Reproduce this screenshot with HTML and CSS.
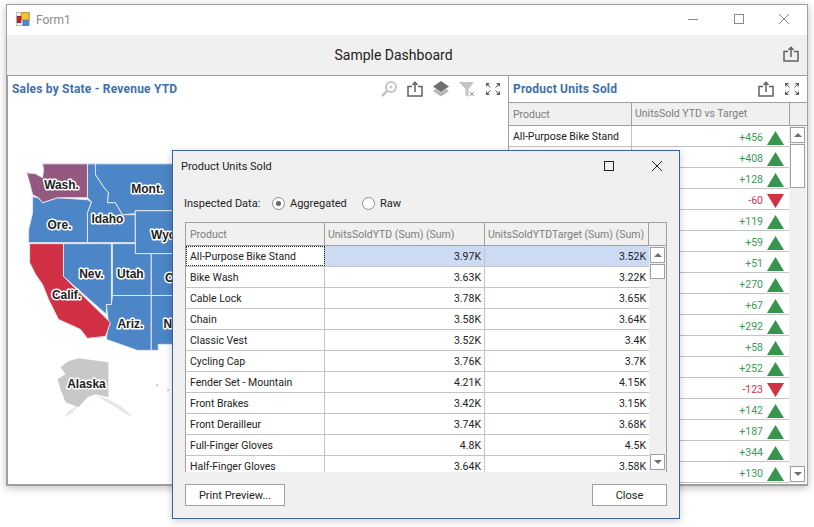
FILE: index.html
```html
<!DOCTYPE html>
<html lang="en">
<head>
    <meta charset="UTF-8">
    <title>Form1</title>
    <link rel="stylesheet" href="styles.css">
</head>
<body>
    <svg class="defs" width="0" height="0">
        <symbol id="share" viewBox="0 0 16 16">
            <path d="M5 5.500H1v9.500h14V5.500h-4" fill="none" stroke="currentColor" stroke-width="1.500"/>
            <path d="M8 11V1.500M5.500 4l2.500-2.700L10.500 4" fill="none" stroke="currentColor" stroke-width="1.500"/>
        </symbol>
        <symbol id="expand" viewBox="0 0 16 16">
            <path d="M1 2h4L1 6zM15 2v4l-4-4zM1 14v-4l4 4zM15 14h-4l4-4z" fill="currentColor"/>
            <path d="M2.500 3.500l3 3M13.500 3.500l-3 3M2.500 12.500l3-3M13.500 12.500l-3-3" stroke="currentColor"/>
        </symbol>
    </svg>

    <div class="window">
        <div class="titlebar">
            <svg class="app-icon" width="14" height="14" viewBox="0 0 16 16">
                <rect x="0.500" y="0.500" width="15" height="15" fill="#f4f4f4" stroke="#b9b9b9"/>
                <rect x="6" y="1" width="9" height="8" fill="#f6c433" stroke="#c98d16"/>
                <rect x="1.500" y="5" width="4" height="7" fill="#c8242a" stroke="#7d1a1a"/>
                <rect x="8" y="10" width="6" height="5" fill="#4f8de0" stroke="#2f62ad"/>
            </svg>
            <span class="form-name">Form1</span>
            <div class="win-buttons">
                <svg width="10" height="10" viewBox="0 0 10 10"><path d="M0 5.500h10" stroke="#8a8a8a"/></svg>
                <svg width="10" height="10" viewBox="0 0 10 10"><rect x="0.500" y="0.500" width="9" height="9" fill="none" stroke="#8a8a8a"/></svg>
                <svg width="10" height="10" viewBox="0 0 10 10"><path d="M0 0l10 10M10 0L0 10" stroke="#8a8a8a"/></svg>
            </div>
        </div>

        <div class="toolbar">
            <span class="dash-title">Sample Dashboard</span>
            <svg class="icon toolbar-share"><use href="#share"/></svg>
        </div>

        <div class="panels">
            <section class="panel map-panel">
                <div class="panel-head">
                    <span class="panel-title">Sales by State - Revenue YTD</span>
                    <div class="panel-icons">
                        <svg class="icon icon-dim" viewBox="0 0 16 16">
                            <circle cx="10" cy="6" r="5" fill="none" stroke="currentColor" stroke-width="2"/>
                            <circle cx="10" cy="6" r="1.500" fill="currentColor"/>
                            <path d="M6 10L1 15" stroke="currentColor" stroke-width="2.500"/>
                        </svg>
                        <svg class="icon"><use href="#share"/></svg>
                        <svg class="icon" viewBox="0 0 16 16">
                            <path d="M0 10l3-2 5 3.500L13 8l3 2-8 5.500z" fill="#b5b5b5"/>
                            <path d="M8 0l8 5.500L8 11 0 5.500z" fill="#6e6e73"/>
                        </svg>
                        <svg class="icon icon-dim" viewBox="0 0 16 16">
                            <path d="M0 1h15L9.500 8v8l-3-2V8z" fill="currentColor"/>
                            <path d="M11 11l4 4M15 11l-4 4" stroke="#8f8f8f"/>
                        </svg>
                        <svg class="icon"><use href="#expand"/></svg>
                    </div>
                </div>
                <svg class="map" viewBox="8 102 500 383" width="500" height="383">
                    <g class="states">
                        <polygon class="st-blue" points="95,164 180,164 180,211 135,211 135,214 122,215 115,203 107,203 108,193 103,187 95,175"/>
                        <polygon class="st-blue" points="87,164 95,164 95,175 103,187 108,193 107,203 115,203 122,215 135,215 135,243 87,243 87,213 91,202 87,198"/>
                        <polygon class="st-blue" points="32,197 38,198 42,203 57,198 87,200 91,202 87,213 87,243 28,243 28,230 32,213"/>
                        <polygon class="st-purple" points="42,164 87,164 87,198 57,198 42,203 38,198 32,195 29,183 26,173 35,174 42,178 43,170"/>
                        <polygon class="st-blue" points="135,211 180,211 180,254 135,254"/>
                        <polygon class="st-blue" points="112,244 135,244 135,254 151,254 151,296 112,296"/>
                        <polygon class="st-blue" points="151,254 180,254 180,296 151,296"/>
                        <polygon class="st-blue" points="63,244 111,244 111,305 106,305 106,315 63,277"/>
                        <polygon class="st-blue" points="112,296 151,296 151,351 137,351 106,340 108,323 106,305 111,305"/>
                        <polygon class="st-blue" points="151,296 180,296 180,345 158,345 158,351 151,351"/>
                        <polygon class="st-red" points="29,244 63,244 63,277 110,323 107,332 105,337 87,339 80,330 58,320 48,300 42,285 35,275 29,263"/>
                    </g>
                    <g class="alaska">
                        <polygon points="78,359 108,363 108,398 95,395 87,398 78,408 65,403 60,390 57,380 65,375 60,368 68,362"/>
                        <polygon class="alaska-faint" points="95,396 108,400 122,408 132,417 128,416 112,406"/>
                        <polygon class="alaska-faint" points="78,406 72,414 63,418 68,412"/>
                        <rect x="156" y="385" width="2" height="2"/>
                        <rect x="167" y="390" width="2" height="2"/>
                    </g>
                    <g class="labels">
                        <text x="61" y="189">Wash.</text>
                        <text x="59" y="229">Ore.</text>
                        <text x="107" y="223">Idaho</text>
                        <text x="147" y="193">Mont.</text>
                        <text x="165" y="239">Wyo.</text>
                        <text x="178" y="282">Colo</text>
                        <text x="91" y="278">Nev.</text>
                        <text x="130" y="278">Utah</text>
                        <text x="66" y="300">Calif.</text>
                        <text x="130" y="329">Ariz.</text>
                        <text x="176" y="329">N.M.</text>
                        <text x="86" y="389">Alaska</text>
                    </g>
                </svg>
            </section>

            <section class="panel units-panel">
                <div class="panel-head">
                    <span class="panel-title">Product Units Sold</span>
                    <div class="panel-icons">
                        <svg class="icon"><use href="#share"/></svg>
                        <svg class="icon"><use href="#expand"/></svg>
                    </div>
                </div>
                <div class="units-grid">
                    <div class="units-table">
                        <div class="units-row units-header">
                            <div class="c-name">Product</div>
                            <div class="c-delta">UnitsSold YTD vs Target</div>
                            <div class="c-corner"></div>
                        </div>
                        <div class="units-row"><div class="c-name">All-Purpose Bike Stand</div><div class="c-delta up">+456<i class="tri"></i></div></div>
                        <div class="units-row"><div class="c-name"></div><div class="c-delta up">+408<i class="tri"></i></div></div>
                        <div class="units-row"><div class="c-name"></div><div class="c-delta up">+128<i class="tri"></i></div></div>
                        <div class="units-row"><div class="c-name"></div><div class="c-delta down">-60<i class="tri"></i></div></div>
                        <div class="units-row"><div class="c-name"></div><div class="c-delta up">+119<i class="tri"></i></div></div>
                        <div class="units-row"><div class="c-name"></div><div class="c-delta up">+59<i class="tri"></i></div></div>
                        <div class="units-row"><div class="c-name"></div><div class="c-delta up">+51<i class="tri"></i></div></div>
                        <div class="units-row"><div class="c-name"></div><div class="c-delta up">+270<i class="tri"></i></div></div>
                        <div class="units-row"><div class="c-name"></div><div class="c-delta up">+67<i class="tri"></i></div></div>
                        <div class="units-row"><div class="c-name"></div><div class="c-delta up">+292<i class="tri"></i></div></div>
                        <div class="units-row"><div class="c-name"></div><div class="c-delta up">+58<i class="tri"></i></div></div>
                        <div class="units-row"><div class="c-name"></div><div class="c-delta up">+252<i class="tri"></i></div></div>
                        <div class="units-row"><div class="c-name"></div><div class="c-delta down">-123<i class="tri"></i></div></div>
                        <div class="units-row"><div class="c-name"></div><div class="c-delta up">+142<i class="tri"></i></div></div>
                        <div class="units-row"><div class="c-name"></div><div class="c-delta up">+187<i class="tri"></i></div></div>
                        <div class="units-row"><div class="c-name"></div><div class="c-delta up">+344<i class="tri"></i></div></div>
                        <div class="units-row"><div class="c-name"></div><div class="c-delta up">+130<i class="tri"></i></div></div>
                    </div>
                    <div class="scrollbar units-scroll">
                        <div class="sb-btn"><i class="arrow-up"></i></div>
                        <div class="sb-thumb"></div>
                        <div class="sb-track"></div>
                        <div class="sb-btn"><i class="arrow-down"></i></div>
                    </div>
                </div>
            </section>
        </div>
    </div>

    <!-- Inspect dialog, floats over the dashboard -->
    <div class="dialog">
        <div class="dialog-title">
            <span>Product Units Sold</span>
            <div class="dialog-buttons">
                <svg width="10" height="10" viewBox="0 0 10 10"><rect x="0.500" y="0.500" width="9" height="9" fill="none" stroke="#222"/></svg>
                <svg width="10" height="10" viewBox="0 0 10 10"><path d="M0 0l10 10M10 0L0 10" stroke="#222"/></svg>
            </div>
        </div>
        <div class="inspect-row">
            <span class="inspect-label">Inspected Data:</span>
            <label class="radio checked"><i></i>Aggregated</label>
            <label class="radio"><i></i>Raw</label>
        </div>
        <div class="data-grid">
            <div class="data-table">
                <div class="data-row data-header">
                    <div class="d-name">Product</div>
                    <div class="d-val1">UnitsSoldYTD (Sum) (Sum)</div>
                    <div class="d-val2">UnitsSoldYTDTarget (Sum) (Sum)</div>
                    <div class="d-corner"></div>
                </div>
                <div class="data-row selected"><div class="d-name">All-Purpose Bike Stand</div><div class="d-val1">3.97K</div><div class="d-val2">3.52K</div></div>
                <div class="data-row"><div class="d-name">Bike Wash</div><div class="d-val1">3.63K</div><div class="d-val2">3.22K</div></div>
                <div class="data-row"><div class="d-name">Cable Lock</div><div class="d-val1">3.78K</div><div class="d-val2">3.65K</div></div>
                <div class="data-row"><div class="d-name">Chain</div><div class="d-val1">3.58K</div><div class="d-val2">3.64K</div></div>
                <div class="data-row"><div class="d-name">Classic Vest</div><div class="d-val1">3.52K</div><div class="d-val2">3.4K</div></div>
                <div class="data-row"><div class="d-name">Cycling Cap</div><div class="d-val1">3.76K</div><div class="d-val2">3.7K</div></div>
                <div class="data-row"><div class="d-name">Fender Set - Mountain</div><div class="d-val1">4.21K</div><div class="d-val2">4.15K</div></div>
                <div class="data-row"><div class="d-name">Front Brakes</div><div class="d-val1">3.42K</div><div class="d-val2">3.15K</div></div>
                <div class="data-row"><div class="d-name">Front Derailleur</div><div class="d-val1">3.74K</div><div class="d-val2">3.68K</div></div>
                <div class="data-row"><div class="d-name">Full-Finger Gloves</div><div class="d-val1">4.8K</div><div class="d-val2">4.5K</div></div>
                <div class="data-row"><div class="d-name">Half-Finger Gloves</div><div class="d-val1">3.64K</div><div class="d-val2">3.58K</div></div>
            </div>
            <div class="scrollbar data-scroll">
                <div class="sb-btn"><i class="arrow-up"></i></div>
                <div class="sb-thumb"></div>
                <div class="sb-track"></div>
                <div class="sb-btn"><i class="arrow-down"></i></div>
            </div>
        </div>
        <div class="dialog-footer">
            <button class="btn btn-print">Print Preview...</button>
            <button class="btn btn-close">Close</button>
        </div>
    </div>
</body>
</html>
```

FILE: styles.css
```css
body {
    margin: 0;
    background-color: white;
    font-family: Roboto, "Liberation Sans", sans-serif;
    font-size: 11px;
    color: #222;
    height: 527px;
    overflow: hidden;
    position: relative;
    white-space: nowrap;
}
.defs {
    position: absolute;
}
.icon {
    width: 16px;
    height: 16px;
    color: #5f6064;
    display: block;
}
.icon-dim {
    color: #c4c4c4;
}

/* Main window */
.window {
    margin: 4px 0 0 6px;
    width: 800px;
    height: 480px;
    border: 1px solid #a0a0a0;
    box-shadow: 0 2px 8px rgba(0, 0, 0, 0.25);
    background-color: white;
    display: flex;
    flex-direction: column;
}
.titlebar {
    height: 30px;
    display: flex;
    align-items: center;
    padding-left: 9px;
    flex: none;
}
.app-icon {
    margin: 0 6px 2px 0;
}
.form-name {
    color: #8a8a8a;
    font-size: 12px;
}
.win-buttons {
    margin: 0 0 2px auto;
    display: flex;
    gap: 35.500px;
    padding-right: 18px;
}
.toolbar {
    height: 40px;
    background-color: #f0f0f0;
    border-bottom: 1px solid #a0a0a0;
    display: flex;
    align-items: center;
    justify-content: center;
    padding-right: 27px;
    position: relative;
    flex: none;
}
.dash-title {
    font-size: 14px;
    color: #222;
}
.toolbar-share {
    position: absolute;
    right: 8px;
    top: 11px;
}
.panels {
    flex: 1;
    display: flex;
    min-height: 0;
}
.panel {
    display: flex;
    flex-direction: column;
    min-width: 0;
}
.map-panel {
    width: 500px;
    border-left: 1px solid #a0a0a0;
    border-right: 1px solid #a0a0a0;
    border-bottom: 1px solid #a0a0a0;
}
.units-panel {
    flex: 1;
    border-bottom: 1px solid #a0a0a0;
}
.panel-head {
    height: 26px;
    display: flex;
    align-items: center;
    padding: 0 7px 0 4px;
    flex: none;
}
.panel-title {
    font-weight: bold;
    color: #3f6fa8;
    font-size: 12px;
    letter-spacing: 0.200px;
}
.panel-icons {
    margin-left: auto;
    display: flex;
    gap: 10px;
}
.map {
    display: block;
    flex: 1;
    min-height: 0;
}

/* Map */
.states polygon {
    stroke: #dfe7f1;
    stroke-width: 1;
}
.st-blue {
    fill: #4d86c6;
}
.st-purple {
    fill: #94587f;
}
.st-red {
    fill: #d13045;
}
.alaska {
    fill: #c8c8c8;
}
.alaska-faint {
    fill: #e6e6e6;
}
.labels text {
    font-family: "Liberation Sans", sans-serif;
    font-weight: bold;
    font-size: 12px;
    text-anchor: middle;
    fill: #222;
    stroke: white;
    stroke-width: 3px;
    stroke-linejoin: round;
    paint-order: stroke;
}

/* Product Units Sold grid */
.units-grid {
    flex: 1;
    display: flex;
    min-height: 0;
    border-top: 1px solid #a0a0a0;
    position: relative;
}
.units-table {
    width: 280px;
    flex: none;
    font-size: 10.500px;
}
.units-row {
    display: flex;
    height: 21px;
    border-bottom: 1px solid #c4c4c4;
    box-sizing: border-box;
}
.units-header {
    height: 23px;
    background-color: #f0f0f0;
    color: #7d7d7d;
    border-bottom: 1px solid #a0a0a0;
    width: 298px;
}
.c-name {
    width: 123px;
    padding-left: 4px;
    box-sizing: border-box;
    line-height: 22px;
    border-right: 1px solid #c4c4c4;
    flex: none;
}
.c-delta {
    flex: none;
    width: 157px;
    display: flex;
    justify-content: flex-end;
    align-items: center;
    padding: 2px 5px 0 0;
    box-sizing: border-box;
}
.units-header .c-name, .units-header .c-delta {
    border-right: 1px solid #a0a0a0;
    line-height: 24px;
}
.units-header .c-delta {
    width: 158px;
    justify-content: flex-start;
    padding: 0 0 0 3px;
}
.c-corner {
    flex: 1;
}
.tri {
    width: 17px;
    height: 14px;
    margin: 0 0 1px 4px;
    align-self: flex-end;
}
.up {
    color: #3a9a57;
}
.up .tri {
    background-color: #38954f;
    clip-path: polygon(50% 0, 100% 100%, 0 100%);
}
.down {
    color: #d9304a;
}
.down .tri {
    background-color: #d13045;
    clip-path: polygon(0 0, 100% 0, 50% 100%);
}
.scrollbar {
    display: flex;
    flex-direction: column;
    width: 15px;
}
.units-scroll {
    position: absolute;
    left: 280px;
    top: 23px;
    height: 355px;
    padding: 1px;
    background-color: #f0f0f0;
}
.sb-btn, .sb-thumb {
    width: 15px;
    box-sizing: border-box;
    border: 1px solid #a0a0a0;
    background-color: white;
    flex: none;
}
.sb-btn {
    height: 16px;
    display: flex;
    align-items: center;
    justify-content: center;
}
.sb-thumb {
    height: 44px;
    margin-top: 1px;
}
.sb-track {
    flex: 1;
}
.arrow-up {
    border: 4px solid transparent;
    border-top: 0;
    border-bottom: 4px solid #6f6f6f;
}
.arrow-down {
    border: 4px solid transparent;
    border-bottom: 0;
    border-top: 4px solid #6f6f6f;
}

/* Inspect dialog */
.dialog {
    position: absolute;
    left: 172px;
    top: 150px;
    width: 506px;
    height: 367px;
    border: 1px solid #3f6299;
    background-color: #f0f0f0;
    box-shadow: 0 2px 8px rgba(0, 0, 0, 0.2);
    display: flex;
    flex-direction: column;
}
.dialog-title {
    height: 30px;
    display: flex;
    align-items: center;
    padding: 0 17px 0 8px;
    box-sizing: border-box;
    flex: none;
}
.dialog-buttons {
    margin-left: auto;
    display: flex;
    gap: 38px;
}
.inspect-row {
    height: 38px;
    display: flex;
    align-items: center;
    padding: 7px 0 0 11px;
    box-sizing: border-box;
    flex: none;
}
.inspect-label {
    width: 88px;
}
.radio {
    display: flex;
    align-items: center;
}
.radio.checked {
    width: 90px;
}
.radio i {
    width: 13px;
    height: 13px;
    border: 1px solid #8d8d8d;
    border-radius: 50%;
    background-color: white;
    box-sizing: border-box;
    margin-right: 5px;
    display: flex;
    align-items: center;
    justify-content: center;
}
.radio.checked i::after {
    content: "";
    width: 5px;
    height: 5px;
    border-radius: 50%;
    background-color: #666;
}
.data-grid {
    margin: 3px 12px 0 12px;
    height: 249px;
    border: 1px solid #a0a0a0;
    border-bottom: 0;
    overflow: hidden;
    position: relative;
    background-color: white;
    flex: none;
}
.data-table {
    font-size: 10.500px;
}
.data-row {
    display: flex;
    height: 21px;
    box-sizing: border-box;
    border-bottom: 1px solid #c4c4c4;
    width: 463px;
    line-height: 22px;
}
.data-header {
    height: 23px;
    width: 480px;
    background-color: #f0f0f0;
    color: #7d7d7d;
    border-bottom: 1px solid #a0a0a0;
    line-height: 24px;
}
.d-name {
    width: 139px;
    box-sizing: border-box;
    padding-left: 4px;
    border-right: 1px solid #c4c4c4;
    flex: none;
}
.d-val1, .d-val2 {
    box-sizing: border-box;
    text-align: right;
    padding-right: 3px;
    flex: none;
}
.d-val1 {
    width: 160px;
    border-right: 1px solid #c4c4c4;
}
.d-val2 {
    width: 164px;
}
.data-header .d-name, .data-header .d-val1, .data-header .d-val2 {
    border-right: 1px solid #a0a0a0;
}
.data-header .d-val1, .data-header .d-val2 {
    text-align: left;
    padding-left: 3px;
}
.d-corner {
    flex: 1;
}
.selected .d-val1, .selected .d-val2 {
    background-color: #ccdaf3;
}
.selected .d-name {
    outline: 1px dotted #222;
    outline-offset: -1px;
}
.data-scroll {
    position: absolute;
    right: 0;
    top: 23px;
    bottom: 0;
    padding: 1px 1px 2px;
    background-color: #f0f0f0;
}
.data-scroll .sb-thumb {
    height: 15px;
}
.dialog-footer {
    display: flex;
    justify-content: space-between;
    padding: 12px 12px 0;
}
.btn {
    height: 22px;
    border: 1px solid #a0a0a0;
    background-color: white;
    font-family: inherit;
    font-size: 11px;
    color: #222;
    padding: 0;
}
.btn-print {
    width: 100px;
}
.btn-close {
    width: 75px;
}
```
